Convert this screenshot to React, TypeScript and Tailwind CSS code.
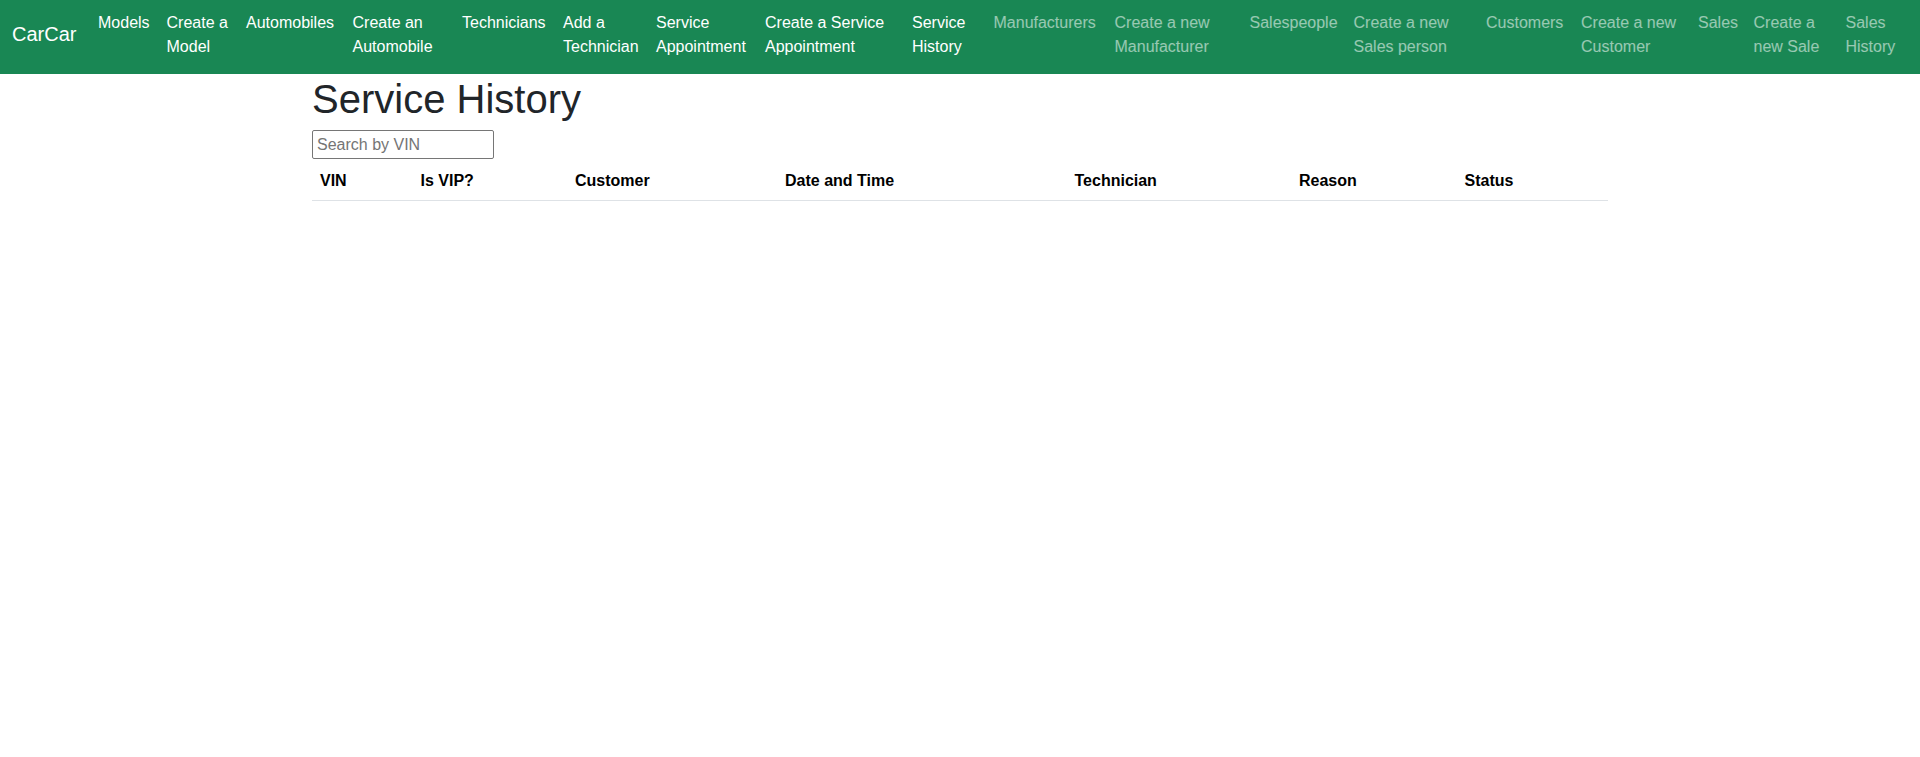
const navItems: { w: string; lines: string[]; active: boolean }[] = [
  { w: "w-[68.5px]", lines: ["Models"], active: true },
  { w: "w-[79.5px]", lines: ["Create a", "Model"], active: true },
  { w: "w-[106.5px]", lines: ["Automobiles"], active: true },
  { w: "w-[109.5px]", lines: ["Create an", "Automobile"], active: true },
  { w: "w-[101px]", lines: ["Technicians"], active: true },
  { w: "w-[93px]", lines: ["Add a", "Technician"], active: true },
  { w: "w-[109px]", lines: ["Service", "Appointment"], active: true },
  { w: "w-[147px]", lines: ["Create a Service", "Appointment"], active: true },
  { w: "w-[81.5px]", lines: ["Service", "History"], active: true },
  { w: "w-[121px]", lines: ["Manufacturers"], active: false },
  { w: "w-[135px]", lines: ["Create a new", "Manufacturer"], active: false },
  { w: "w-[104px]", lines: ["Salespeople"], active: false },
  { w: "w-[132.5px]", lines: ["Create a new", "Sales person"], active: false },
  { w: "w-[95px]", lines: ["Customers"], active: false },
  { w: "w-[117px]", lines: ["Create a new", "Customer"], active: false },
  { w: "w-[55.5px]", lines: ["Sales"], active: false },
  { w: "w-[92px]", lines: ["Create a", "new Sale"], active: false },
  { w: "w-[63px]", lines: ["Sales", "History"], active: false },
];

const columns: { w: string; label: string }[] = [
  { w: "w-[100.5px]", label: "VIN" },
  { w: "w-[154.5px]", label: "Is VIP?" },
  { w: "w-[210px]", label: "Customer" },
  { w: "w-[289.5px]", label: "Date and Time" },
  { w: "w-[224.5px]", label: "Technician" },
  { w: "w-[165.5px]", label: "Reason" },
  { w: "w-[151.5px]", label: "Status" },
];

export default function App() {
  return (
    <div className="min-h-screen bg-white font-['Liberation_Sans',Arial,sans-serif] text-[#212529]">
      <nav className="flex items-center bg-[#198754] px-3 pt-[2px] pb-2">
        <a
          href="#"
          className="mr-4 w-[62px] shrink-0 whitespace-nowrap py-[5px] text-xl leading-[30px] text-white"
        >
          CarCar
        </a>
        <ul className="flex">
          {navItems.map((item, i) => (
            <li key={i} className={`${item.w} shrink-0`}>
              <a
                href="#"
                className={`block whitespace-nowrap px-2 pt-[9px] pb-[7px] text-base leading-6 ${
                  item.active ? "text-white" : "text-white/55"
                }`}
              >
                {item.lines.map((l, j) => (
                  <span key={j} className="block">
                    {l}
                  </span>
                ))}
              </a>
            </li>
          ))}
        </ul>
      </nav>
      <main className="mx-auto w-[1320px] px-3">
        <h1 className="mb-[7px] pt-px text-[40px] font-medium leading-[48px]">Service History</h1>
        <input
          type="text"
          placeholder="Search by VIN"
          className="block h-[29px] w-[182px] rounded-[2px] border border-[#767676] px-[4px] pt-px text-base text-[#212529] placeholder:text-[#757575]"
        />
        <table className="mt-[1px] w-full table-fixed border-collapse">
          <colgroup>
            {columns.map((c, i) => (
              <col key={i} className={c.w} />
            ))}
          </colgroup>
          <thead>
            <tr>
              {columns.map((c, i) => (
                <th
                  key={i}
                  className="border-b border-[#dee2e6] px-2 pt-[9px] pb-[7px] text-left text-base font-bold leading-6 text-black"
                >
                  {c.label}
                </th>
              ))}
            </tr>
          </thead>
          <tbody></tbody>
        </table>
      </main>
    </div>
  );
}
